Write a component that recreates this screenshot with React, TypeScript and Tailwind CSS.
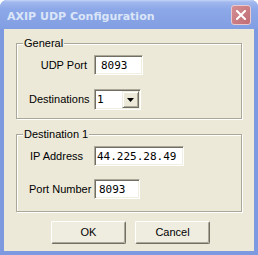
import React from "react";

const sunken =
  "flex items-center bg-white border border-t-[#aca899] border-l-[#aca899] border-b-white border-r-white shadow-[inset_1px_1px_0_#716f64,inset_-1px_-1px_0_#f1efe2]";

function Field({ w, value, pad }: { w: string; value: string; pad: string }) {
  return (
    <div className={`${sunken} ${w} h-[20px]`}>
      <span className={`${pad} font-['DejaVu_Sans_Mono',monospace] text-[11px] leading-[13px] text-black`}>
        {value}
      </span>
    </div>
  );
}

function Group({ label, h, children }: { label: string; h: string; children: React.ReactNode }) {
  return (
    <div
      className={`relative ml-[12px] w-[226px] ${h} border border-[#aca899] shadow-[inset_1px_1px_0_#fff,1px_1px_0_#fff]`}
    >
      <span className="absolute -top-[7px] left-[6px] bg-[#ece9d8] px-[1px] text-[11px] leading-[13px] text-black">
        {label}
      </span>
      {children}
    </div>
  );
}

function Btn({ label }: { label: string }) {
  return (
    <button className="flex h-[23px] w-[75px] items-center justify-center rounded-[2px] border border-t-white border-l-white border-b-[#716f64] border-r-[#716f64] bg-[#efede0] text-[11px] leading-[13px] text-black shadow-[inset_-1px_-1px_0_#aca899]">
      {label}
    </button>
  );
}

export default function App() {
  return (
    <div className="h-[255px] w-[258px] bg-white font-['Liberation_Sans',Arial,sans-serif]">
      <div className="flex h-full flex-col overflow-hidden rounded-t-[7px] bg-[#7d9ae0]">
        <div className="flex h-[29px] shrink-0 items-start bg-[linear-gradient(180deg,#c6d5f7_0px,#a2b9ee_2px,#8da8e8_9px,#819ee3_100%)] pl-[7px] pr-[7px]">
          <span className="mt-[10px] font-['DejaVu_Sans',sans-serif] text-[11px] font-bold leading-[13px] text-[#dbe5f8]">
            AXIP UDP Configuration
          </span>
          <div className="ml-auto mt-[5px] flex h-[20px] w-[20px] items-center justify-center rounded-[3px] border border-[#e9c9cc] bg-[linear-gradient(135deg,#d58e93,#c06d74)]">
            <svg width="10" height="10" viewBox="0 0 10 10">
              <path d="M1 1 L9 9 M9 1 L1 9" stroke="#ffffff" strokeWidth="2" strokeLinecap="square" />
            </svg>
          </div>
        </div>
        <div className="mx-[4px] mb-[4px] flex flex-1 flex-col bg-[#ece9d8] pt-[14px]">
          <Group label="General" h="h-[76px]">
            <div className="flex flex-col pl-[12px] pt-[11px]">
              <div className="flex h-[20px] items-center">
                <span className="w-[58px] whitespace-nowrap text-right text-[11px] leading-[13px] text-black">
                  UDP Port
                </span>
                <div className="ml-[7px]">
                  <Field w="w-[49px]" value="8093" pad="pl-[6px]" />
                </div>
              </div>
              <div className="mt-[14px] flex h-[21px] items-center">
                <span className="w-[58px] whitespace-nowrap text-[11px] leading-[13px] text-black">
                  Destinations
                </span>
                <div className={`${sunken} ml-[7px] h-[21px] w-[47px] pr-[1px]`}>
                  <span className="flex-1 pl-[2px] font-['DejaVu_Sans_Mono',monospace] text-[11px] leading-[13px] text-black">
                    1
                  </span>
                  <div className="flex h-[17px] w-[17px] items-center justify-center border border-t-[#f1efe2] border-l-[#f1efe2] border-b-[#716f64] border-r-[#716f64] bg-[#ece9d8] shadow-[inset_1px_1px_0_#fff,inset_-1px_-1px_0_#aca899]">
                    <svg width="7" height="4" viewBox="0 0 7 4">
                      <path d="M0 0 H7 L3.5 4 Z" fill="#000" />
                    </svg>
                  </div>
                </div>
              </div>
            </div>
          </Group>
          <div className="mt-[15px]">
            <Group label="Destination 1" h="h-[78px]">
              <div className="flex flex-col pl-[12px] pt-[11px]">
                <div className="flex h-[20px] items-center">
                  <span className="w-[58px] whitespace-nowrap pl-[1px] text-[11px] leading-[13px] text-black">
                    IP Address
                  </span>
                  <div className="ml-[7px]">
                    <Field w="w-[90px]" value="44.225.28.49" pad="pl-[2px]" />
                  </div>
                </div>
                <div className="mt-[13px] flex h-[20px] items-center">
                  <span className="w-[58px] whitespace-nowrap text-[11px] leading-[13px] text-black">
                    Port Number
                  </span>
                  <div className="ml-[7px]">
                    <Field w="w-[46px]" value="8093" pad="pl-[4px]" />
                  </div>
                </div>
              </div>
            </Group>
          </div>
          <div className="ml-[47px] mt-[9px] flex gap-[9px]">
            <Btn label="OK" />
            <Btn label="Cancel" />
          </div>
        </div>
      </div>
    </div>
  );
}
